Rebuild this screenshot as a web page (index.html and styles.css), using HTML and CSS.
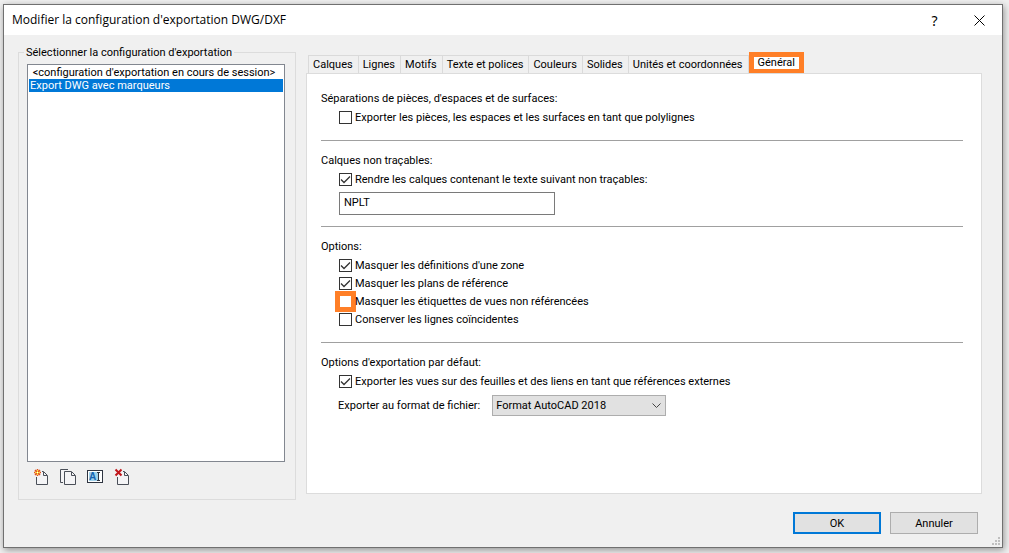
FILE: index.html
```html
<!DOCTYPE html>
<html lang="fr">
<head>
  <meta charset="UTF-8">
  <meta name="viewport" content="width=device-width, initial-scale=1.0">
  <title>Modifier la configuration d'exportation DWG/DXF</title>
  <link rel="stylesheet" href="styles.css">
</head>
<body>

<main class="dialog">
  <header class="titlebar">
    <h1>Modifier la configuration d'exportation DWG/DXF</h1>
    <button class="title-btn" type="button">?</button>
    <button class="title-btn" type="button" aria-label="Fermer">
      <svg width="11" height="11" viewBox="0 0 11 11"><path d="M.5 .5l10 10M10.5 .5l-10 10" stroke="#000" fill="none"/></svg>
    </button>
  </header>

  <div class="content">
    <fieldset class="setups">
      <legend><label for="setup-list">Sélectionner la configuration d'exportation</label></legend>
      <select id="setup-list" class="setup-list" size="20">
        <option>&nbsp;&lt;configuration d'exportation en cours de session&gt;</option>
        <option selected>Export DWG avec marqueurs</option>
      </select>
      <div class="toolbar">
        <button type="button" aria-label="Nouvelle configuration">
          <svg width="17" height="18" viewBox="0 0 17 18">
            <path class="sheet" d="M3.5 8V16.5H14.5V7.5L10.5 3.5H8V8z"/>
            <path class="fold" d="M3.5 9V16.5H14.5V7.5L10.5 3.5H9M10.5 4V7.5H14"/>
            <path d="M4.500 1v7M1 4.500h7M2 2l5 5M7 2l-5 5" stroke="#e0521c" stroke-width="1.500"/>
            <path d="M4.500 2v5M2 4.500h5" stroke="#ffd93a"/>
            <rect x="4" y="4" width="1" height="1" fill="#fff"/>
          </svg>
        </button>
        <button type="button" aria-label="Dupliquer la configuration">
          <svg width="17" height="18" viewBox="0 0 17 18">
            <path class="page" d="M8 1.500H.5V14.500H3"/>
            <path class="page" d="M4.500 3.500H11.500L15.500 7.500V16.500H4.500z"/>
            <path class="fold" d="M11.500 4V7.500H15"/>
          </svg>
        </button>
        <button type="button" aria-label="Renommer la configuration">
          <svg width="17" height="18" viewBox="0 0 17 18">
            <rect x=".5" y="2.500" width="15" height="12" fill="#fff" stroke="#2e3440"/>
            <rect x="2" y="4" width="9" height="9" fill="#9fd0ea"/>
            <text x="2" y="12" class="letter">A</text>
            <path d="M10 4.500h3M10 12.500h3M11.500 4.500v8" stroke="#2e3440" fill="none"/>
          </svg>
        </button>
        <button type="button" aria-label="Supprimer la configuration">
          <svg width="17" height="18" viewBox="0 0 17 18">
            <path class="sheet" d="M3.500 8V16.500H14.500V7.500L10.500 3.500H8V8z"/>
            <path class="fold" d="M3.500 9V16.500H14.500V7.500L10.500 3.500H9M10.500 4V7.500H14"/>
            <path d="M1.500 1.500l6 6M7.500 1.500l-6 6" stroke="#c0151a" stroke-width="2"/>
          </svg>
        </button>
      </div>
    </fieldset>

    <div class="tabs">
      <nav class="tab-row" role="tablist">
        <button type="button" role="tab">Calques</button>
        <button type="button" role="tab">Lignes</button>
        <button type="button" role="tab">Motifs</button>
        <button type="button" role="tab">Texte et polices</button>
        <button type="button" role="tab">Couleurs</button>
        <button type="button" role="tab">Solides</button>
        <button type="button" role="tab">Unités et coordonnées</button>
        <button type="button" role="tab" class="active" aria-selected="true">Général</button>
      </nav>

      <div class="panel" role="tabpanel">
        <section>
          <h2>Séparations de pièces, d'espaces et de surfaces:</h2>
          <label class="check"><input type="checkbox">Exporter les pièces, les espaces et les surfaces en tant que polylignes</label>
        </section>

        <section>
          <h2>Calques non traçables:</h2>
          <label class="check"><input type="checkbox" checked>Rendre les calques contenant le texte suivant non traçables:</label>
          <input class="text" type="text" value="NPLT" aria-label="Texte des calques non traçables">
        </section>

        <section>
          <h2>Options:</h2>
          <label class="check"><input type="checkbox" checked>Masquer les définitions d'une zone</label>
          <label class="check"><input type="checkbox" checked>Masquer les plans de référence</label>
          <label class="check"><input type="checkbox" class="marked">Masquer les étiquettes de vues non référencées</label>
          <label class="check"><input type="checkbox">Conserver les lignes coïncidentes</label>
        </section>

        <section>
          <h2>Options d'exportation par défaut:</h2>
          <label class="check"><input type="checkbox" checked>Exporter les vues sur des feuilles et des liens en tant que références externes</label>
          <div class="format-row">
            <label for="format">Exporter au format de fichier:</label>
            <select id="format" class="format">
              <option>Format AutoCAD 2018</option>
            </select>
          </div>
        </section>
      </div>
    </div>
  </div>

  <footer class="actions">
    <button type="button" class="btn primary">OK</button>
    <button type="button" class="btn">Annuler</button>
    <svg class="grip" width="8" height="8" viewBox="0 0 8 8"><path d="M6 0h2v2h-2zM3 3h2v2h-2zM6 3h2v2h-2zM0 6h2v2h-2zM3 6h2v2h-2zM6 6h2v2h-2z" fill="#bfbfbf"/></svg>
  </footer>
</main>

</body>
</html>
```
FILE: styles.css
```css
* { box-sizing: border-box; }
body {
  margin: 0;
  padding: 4px 6px 5px 3px;
  min-height: 100vh;
  display: flex;
  background: #f0f0f0;
  color: #000;
  font: 11px/15px Tahoma, Roboto, sans-serif;
}
button, input, select { font: inherit; color: inherit; margin: 0; }
h1, h2 { margin: 0; font-weight: normal; }

.dialog {
  position: relative;
  flex: 1;
  display: flex;
  flex-direction: column;
  background: #f0f0f0;
  border: 1px solid #707070;
  box-shadow: 1px 2px 7px rgba(0,0,0,0.4);
}
.titlebar {
  display: flex;
  align-items: center;
  height: 30px;
  padding-left: 8px;
  background: #fff;
}
.titlebar h1 { flex: 1; font: 12px/16px "Segoe UI", "Open Sans", sans-serif; }
.title-btn {
  width: 45px;
  height: 30px;
  padding: 0;
  border: none;
  background: none;
  font: 14px "Noto Sans", sans-serif;
}

.content {
  flex: 1;
  display: flex;
  gap: 10px;
  padding: 10px 20px 0 14px;
}
.setups {
  width: 278px;
  display: flex;
  flex-direction: column;
  margin: 0;
  padding: 4px 10px 4px 8px;
  border: 1px solid #dcdcdc;
}
.setups legend { margin-left: -3px; padding: 0 2px; }
.setup-list {
  width: 100%;
  height: 398px;
  padding: 1px;
  border: 1px solid #828790;
  border-radius: 0;
  background: #fff;
  outline: none;
  overflow: hidden;
}
.setup-list option {
  height: 13px;
  min-height: 13px;
  padding: 0 1px;
  line-height: 14px;
}
.setup-list option:checked {
  background: #0078d7 linear-gradient(#0078d7, #0078d7);
  color: #fff;
  -webkit-text-fill-color: #fff;
}
.toolbar { display: flex; gap: 10px; padding: 6px; }
.toolbar button { width: 17px; height: 18px; padding: 0; border: none; background: none; }
.toolbar svg { display: block; }
.page { fill: #f4f4f6; stroke: #4a4f58; }
.sheet { fill: #f4f4f6; }
.fold { fill: none; stroke: #4a4f58; }
.letter { font: bold 10px "Liberation Sans", sans-serif; fill: #1463b0; }

.tabs { flex: 1; display: flex; flex-direction: column; padding: 7px 0 6px; }
.tab-row { display: flex; align-items: flex-end; height: 22px; padding-left: 2px; margin-bottom: -1px; }
.tab-row button {
  height: 19px;
  padding: 0 5px 0 4px;
  border: 1px solid #dadada;
  border-left-width: 0;
  background: #f0f0f0;
  white-space: nowrap;
}
.tab-row button:first-child { border-left-width: 1px; }
.tab-row .active {
  height: 22px;
  padding: 0 4px;
  border: 5px solid #ff7f27;
  background: #fff;
  line-height: 12px;
}
.panel {
  flex: 1;
  padding: 17px 18px 0 14px;
  background: #fff;
  border: 1px solid #dcdcdc;
}
.panel section { padding-bottom: 11px; margin-bottom: 12px; border-bottom: 1px solid #a0a0a0; }
.panel section:last-child { border: none; }
.panel h2 { font-size: 11px; margin-bottom: 2px; }
.check { display: flex; align-items: center; gap: 3px; height: 18px; padding-left: 18px; }
.check:last-child { margin-bottom: 3px; }
.check input {
  appearance: none;
  width: 13px;
  height: 13px;
  border: 1px solid #333;
  background: #fff;
}
.check input:checked {
  background: #fff url("data:image/svg+xml,%3Csvg xmlns='http://www.w3.org/2000/svg' viewBox='0 0 11 11'%3E%3Cpath d='M1 5.500l3 3 6-6' fill='none' stroke='%23333' stroke-width='1.300'/%3E%3C/svg%3E");
}
.check .marked { border-color: #ff7f27; outline: 4px solid #ff7f27; }
.text {
  display: block;
  width: 216px;
  height: 23px;
  margin: 4px 0 0 18px;
  padding: 0 4px 3px;
  border: 1px solid #7a7a7a;
}
.format-row { display: flex; align-items: center; gap: 12px; padding: 5px 0 0 17px; }
.format {
  appearance: none;
  width: 174px;
  height: 21px;
  padding: 0 3px;
  border: 1px solid #adadad;
  border-radius: 0;
  background: #e1e1e1 url("data:image/svg+xml,%3Csvg xmlns='http://www.w3.org/2000/svg' width='9' height='6'%3E%3Cpath d='M.5 .5l4 4 4-4' fill='none' stroke='%23444'/%3E%3C/svg%3E") no-repeat right 4px center;
}

.actions { display: flex; justify-content: flex-end; gap: 9px; padding: 12px 24px 13px; }
.btn { width: 88px; height: 22px; padding: 0; border: 1px solid #adadad; background: #e1e1e1; }
.primary { border: 2px solid #0078d7; }
.grip { position: absolute; right: 2px; bottom: 2px; }
```
